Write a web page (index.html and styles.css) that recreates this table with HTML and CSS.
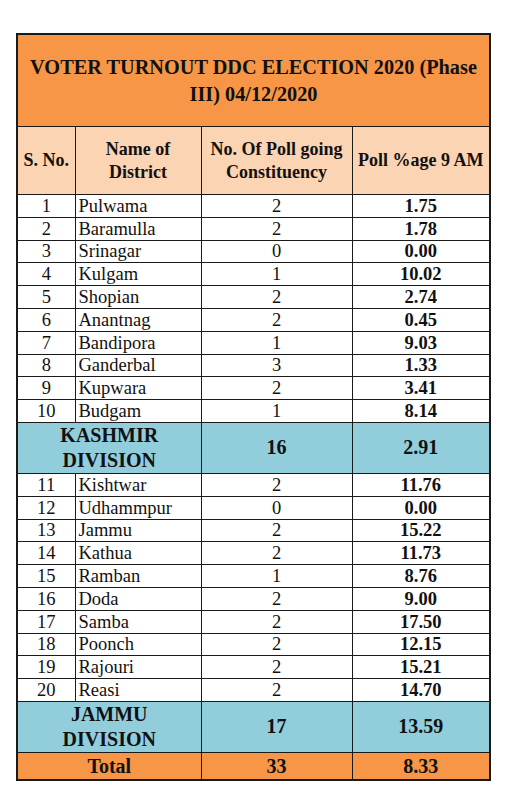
FILE: index.html
```html
<!DOCTYPE html>
<html lang="en">

<head>
  <meta charset="UTF-8">
  <meta name="viewport" content="width=device-width, initial-scale=1.0">
  <title>Voter Turnout DDC Election 2020</title>
  <link rel="stylesheet" href="styles.css">
</head>

<body>
  <table class="turnout">
    <colgroup>
      <col class="col-sno">
      <col class="col-name">
      <col class="col-poll">
      <col class="col-pct">
    </colgroup>
    <tr class="title-row">
      <td colspan="4">VOTER TURNOUT DDC ELECTION 2020 (Phase III) 04/12/2020</td>
    </tr>
    <tr class="head-row">
      <th>S. No.</th>
      <th>Name of<br>District</th>
      <th>No. Of Poll going<br>Constituency</th>
      <th>Poll %age 9 AM</th>
    </tr>
    <tr><td>1</td><td class="name">Pulwama</td><td>2</td><td class="pct">1.75</td></tr>
    <tr><td>2</td><td class="name">Baramulla</td><td>2</td><td class="pct">1.78</td></tr>
    <tr><td>3</td><td class="name">Srinagar</td><td>0</td><td class="pct">0.00</td></tr>
    <tr><td>4</td><td class="name">Kulgam</td><td>1</td><td class="pct">10.02</td></tr>
    <tr><td>5</td><td class="name">Shopian</td><td>2</td><td class="pct">2.74</td></tr>
    <tr><td>6</td><td class="name">Anantnag</td><td>2</td><td class="pct">0.45</td></tr>
    <tr><td>7</td><td class="name">Bandipora</td><td>1</td><td class="pct">9.03</td></tr>
    <tr><td>8</td><td class="name">Ganderbal</td><td>3</td><td class="pct">1.33</td></tr>
    <tr><td>9</td><td class="name">Kupwara</td><td>2</td><td class="pct">3.41</td></tr>
    <tr><td>10</td><td class="name">Budgam</td><td>1</td><td class="pct">8.14</td></tr>
    <tr class="division-row">
      <td colspan="2">KASHMIR<br>DIVISION</td>
      <td>16</td>
      <td>2.91</td>
    </tr>
    <tr><td>11</td><td class="name">Kishtwar</td><td>2</td><td class="pct">11.76</td></tr>
    <tr><td>12</td><td class="name">Udhammpur</td><td>0</td><td class="pct">0.00</td></tr>
    <tr><td>13</td><td class="name">Jammu</td><td>2</td><td class="pct">15.22</td></tr>
    <tr><td>14</td><td class="name">Kathua</td><td>2</td><td class="pct">11.73</td></tr>
    <tr><td>15</td><td class="name">Ramban</td><td>1</td><td class="pct">8.76</td></tr>
    <tr><td>16</td><td class="name">Doda</td><td>2</td><td class="pct">9.00</td></tr>
    <tr><td>17</td><td class="name">Samba</td><td>2</td><td class="pct">17.50</td></tr>
    <tr><td>18</td><td class="name">Poonch</td><td>2</td><td class="pct">12.15</td></tr>
    <tr><td>19</td><td class="name">Rajouri</td><td>2</td><td class="pct">15.21</td></tr>
    <tr><td>20</td><td class="name">Reasi</td><td>2</td><td class="pct">14.70</td></tr>
    <tr class="division-row jammu">
      <td colspan="2">JAMMU<br>DIVISION</td>
      <td>17</td>
      <td>13.59</td>
    </tr>
    <tr class="total-row">
      <td colspan="2">Total</td>
      <td>33</td>
      <td>8.33</td>
    </tr>
  </table>
</body>

</html>
```

FILE: styles.css
```css
body {
  margin: 0;
  padding: 33px 0 0 16px;
  background-color: #fff;
  font-family: "Liberation Serif", "Times New Roman", serif;
  color: #111;
}

.turnout {
  border-collapse: collapse;
  table-layout: fixed;
  width: 473px;
  border: 2px solid #1a1a1a;
}

.col-sno {
  width: 58px;
}

.col-name {
  width: 126px;
}

.col-poll {
  width: 151px;
}

.col-pct {
  width: 138px;
}

.turnout td,
.turnout th {
  border: 1.5px solid #1a1a1a;
  padding: 0;
  text-align: center;
  font-size: 18.5px;
  line-height: 20px;
  height: 21.8px;
}

.turnout td.name {
  text-align: left;
  padding-left: 3px;
}

.turnout td.pct {
  font-weight: bold;
}

.title-row td {
  background-color: #f79646;
  font-weight: bold;
  font-size: 20.3px;
  line-height: 27px;
  height: 91px;
  padding: 0 4px;
}

.head-row th {
  background-color: #fbd4b4;
  font-size: 18px;
  line-height: 23px;
  height: 67px;
}

.division-row td {
  background-color: #92cddc;
  font-weight: bold;
  font-size: 20px;
  line-height: 25px;
  height: 48px;
}

.division-row.jammu td {
  height: 50px;
}

.total-row td {
  background-color: #f79646;
  font-weight: bold;
  font-size: 20px;
  line-height: 24px;
  height: 26px;
}
```
